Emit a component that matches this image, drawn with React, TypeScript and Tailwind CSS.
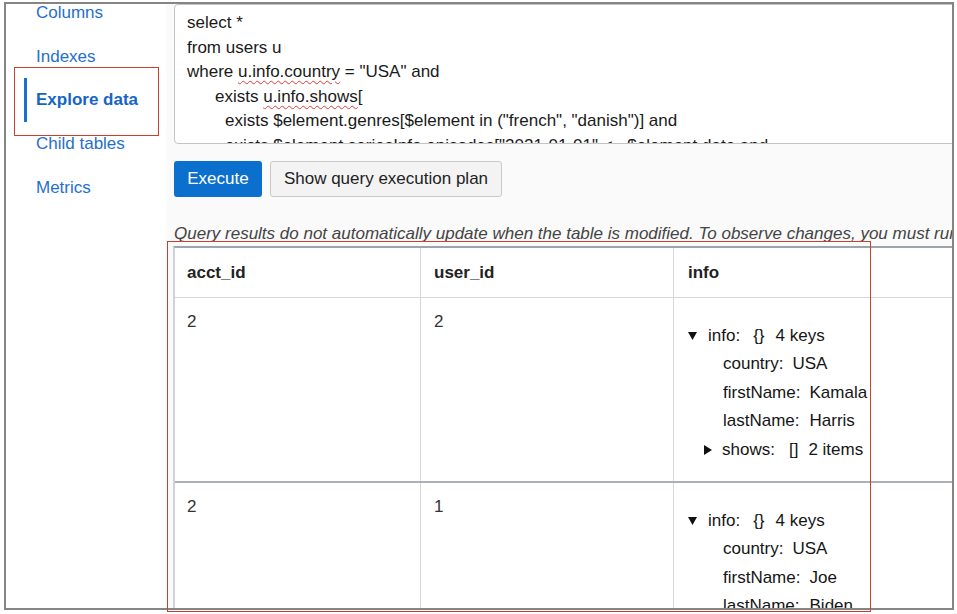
import React from "react";

const font = { fontFamily: '"Liberation Sans", Arial, sans-serif' };

function Tri({ down }: { down: boolean }) {
  return down ? (
    <svg width="9" height="8" viewBox="0 0 9 8" className="shrink-0">
      <polygon points="0,0 9,0 4.5,8" fill="#111" />
    </svg>
  ) : (
    <svg width="8" height="10" viewBox="0 0 8 10" className="shrink-0">
      <polygon points="0,0 8,5 0,10" fill="#111" />
    </svg>
  );
}

function Tree({ first, last, showShows }: { first: string; last: string; showShows: boolean }) {
  return (
    <div className="text-[17px] leading-[28.4px] text-[#151515] whitespace-nowrap">
      <div className="flex items-center">
        <Tri down />
        <span className="ml-[11px]">info:</span>
        <span className="ml-[13px]">{"{}"}</span>
        <span className="ml-[11px]">4 keys</span>
      </div>
      <div className="pl-[35px]">
        <span>country:</span>
        <span className="ml-[9px]">USA</span>
      </div>
      <div className="pl-[35px]">
        <span>firstName:</span>
        <span className="ml-[9px]">{first}</span>
      </div>
      <div className="pl-[35px]">
        <span>lastName:</span>
        <span className="ml-[10px]">{last}</span>
      </div>
      {showShows && (
        <div className="pl-[16px] flex items-center">
          <Tri down={false} />
          <span className="ml-[10px]">shows:</span>
          <span className="ml-[14px]">[]</span>
          <span className="ml-[10px]">2 items</span>
        </div>
      )}
    </div>
  );
}

function Row({ a, u, first, last, shows }: { a: string; u: string; first: string; last: string; shows: boolean }) {
  return (
    <div className="grid grid-cols-[246px_253px_1fr] border-b-2 border-[#a9b0b7]">
      <div className="border-r border-[#d4d8dc] pl-[12px] pt-[14px] text-[17px] leading-[20px] text-[#333]">{a}</div>
      <div className="border-r border-[#d4d8dc] pl-[13px] pt-[14px] text-[17px] leading-[20px] text-[#333]">{u}</div>
      <div className="pl-[14px] pt-[24px] pb-[17px]">
        <Tree first={first} last={last} showShows={shows} />
      </div>
    </div>
  );
}

export default function App() {
  const navItems = ["Columns", "Indexes", "Explore data", "Child tables", "Metrics"];
  const sq = "underline decoration-wavy decoration-[#e53935] decoration-1 underline-offset-[3px]";
  return (
    <div className="w-[957px] h-[614px] bg-white relative overflow-hidden" style={font}>
      <div className="ml-[4px] mt-[2px] w-[950px] h-[608px] border-2 border-[#858585] flex overflow-hidden bg-[#fafafa]">
        {/* Sidebar */}
        <div className="w-[160px] shrink-0 bg-white">
          <div className="-mt-[13px]">
            {navItems.map((n) => {
              const active = n === "Explore data";
              return (
                <div
                  key={n}
                  className={
                    active
                      ? "h-[44px] ml-[18px] pl-[9px] border-l-[3px] border-[#1a6fcf] flex items-center text-[17px] font-bold text-[#1565c8]"
                      : "h-[43.6px] ml-[18px] pl-[9px] border-l-[3px] border-transparent flex items-center text-[17px] text-[#1f6fd0]"
                  }
                >
                  {n}
                </div>
              );
            })}
          </div>
        </div>
        {/* Main */}
        <div className="flex-1 min-w-0 pl-[8px] overflow-hidden">
          <div className="w-[900px] h-[140px] bg-white border border-[#c4c4c4] rounded-[4px] overflow-hidden pl-[12px] pt-[6px] text-[17px] leading-[24.5px] text-[#1a1a1a] whitespace-nowrap">
            <div>select *</div>
            <div>from users u</div>
            <div>
              where <span className={sq}>u.info.country</span> = "USA" and
            </div>
            <div className="pl-[28px]">
              exists <span className={sq}>u.info.shows</span>[
            </div>
            <div className="pl-[38px]">exists $element.genres[$element in ("french", "danish")] and</div>
            <div className="pl-[38px]">exists $element.seriesInfo.episodes["2021-01-01" &lt;= $element.date and</div>
          </div>
          <div className="flex gap-[8px] mt-[17px]">
            <button className="h-[36px] w-[88px] bg-[#0b6fce] text-white text-[17px] rounded-[3px]">Execute</button>
            <button className="h-[36px] w-[232px] bg-[#f3f3f3] border border-[#c9c9c9] text-[#222] text-[17px] rounded-[3px]">
              Show query execution plan
            </button>
          </div>
          <div className="mt-[27px] h-[20px] leading-[20px] text-[17px] italic text-[#444] whitespace-nowrap">
            Query results do not automatically update when the table is modified. To observe changes, you must run the query again.
          </div>
          <div className="mt-[2px] -ml-[1px] w-[900px] border-l-2 border-t-2 border-l-[#cdd3d8] border-t-[#9ea4ab] bg-white">
            <div className="grid grid-cols-[246px_253px_1fr] h-[50px] border-b border-[#d4d8dc] text-[17px] font-bold text-[#222]">
              <div className="border-r border-[#d4d8dc] pl-[12px] flex items-center">acct_id</div>
              <div className="border-r border-[#d4d8dc] pl-[13px] flex items-center">user_id</div>
              <div className="pl-[14px] flex items-center">info</div>
            </div>
            <Row a="2" u="2" first="Kamala" last="Harris" shows />
            <Row a="2" u="1" first="Joe" last="Biden" shows />
          </div>
        </div>
      </div>
      {/* Annotation rectangles */}
      <div className="absolute left-[14px] top-[67px] w-[145px] h-[69px] border border-[#c8412f] pointer-events-none" />
      <div className="absolute left-[167px] top-[241px] w-[704px] h-[371px] border border-[#c8412f] pointer-events-none" />
    </div>
  );
}
